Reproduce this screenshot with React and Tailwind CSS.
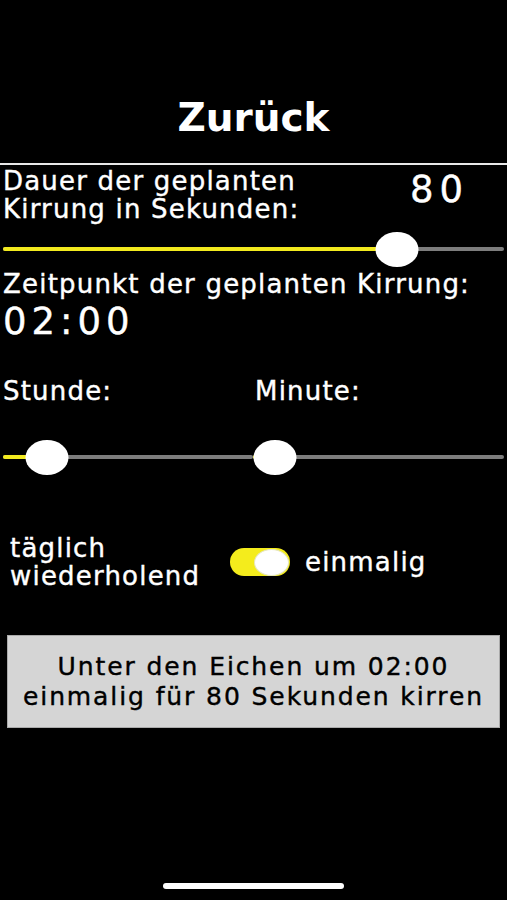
import React from "react";

function Slider({ value }) {
  return (
    <div className="relative h-[36px] flex items-center">
      <div className="w-full h-[4px] rounded-full bg-[#7d7d7d]" />
      <div
        className="absolute left-0 h-[4px] rounded-full bg-[#f2ea1e]"
        style={{ width: `${value}%` }}
      />
      <div
        className="absolute h-[35px] w-[43px] rounded-[50%] bg-white -translate-x-1/2"
        style={{ left: `${value}%` }}
      />
    </div>
  );
}

export default function App() {
  return (
    <div
      className="min-h-[900px] w-[507px] bg-black text-white flex flex-col relative [-webkit-text-stroke:0.4px]"
      style={{ fontFamily: "'DejaVu Sans', Verdana, sans-serif" }}
    >
      <div className="pt-[95px] h-[163px] text-center text-[39px] leading-[46px] font-bold [-webkit-text-stroke:0px]">
        Zurück
      </div>
      <div className="h-[2px] bg-[#e8e8e8]" />

      <div className="flex justify-between pl-[3px] pr-[38px] pt-[2px]">
        <div className="text-[26px] leading-[28px] tracking-[1.2px]">
          Dauer der geplanten
          <br />
          Kirrung in Sekunden:
        </div>
        <div className="text-[37px] leading-[40px] tracking-[6px] pt-[3px]">80</div>
      </div>

      <div className="px-[3px] mt-[8px]">
        <Slider value={78.7} />
      </div>

      <div className="px-[3px] mt-[2px] text-[26px] leading-[30px] tracking-[1.2px]">
        Zeitpunkt der geplanten Kirrung:
      </div>
      <div className="px-[3px] mt-[1px] text-[37px] leading-[44px] tracking-[5px]">02:00</div>

      <div className="flex mt-[32px] text-[26px] leading-[30px] tracking-[1.2px]">
        <div className="w-[252px] pl-[3px]">Stunde:</div>
        <div className="pl-[3px]">Minute:</div>
      </div>

      <div className="flex mt-[33px] px-[3px]">
        <div className="w-[250px]">
          <Slider value={17.5} />
        </div>
        <div className="flex-1">
          <Slider value={8.7} />
        </div>
      </div>

      <div className="flex items-center mt-[59px] pl-[10px]">
        <div className="text-[26px] leading-[28px] tracking-[1.2px] w-[220px]">
          täglich
          <br />
          wiederholend
        </div>
        <div className="w-[60px] h-[28px] rounded-full bg-[#f4ec1c] flex items-center justify-end pr-[1px]">
          <div className="w-[35px] h-[27px] rounded-[50%] bg-white border border-[#e6e6c0]" />
        </div>
        <div className="ml-[15px] text-[26px] leading-[28px] tracking-[1.2px]">einmalig</div>
      </div>

      <div className="mx-[7px] mt-[45px] w-[493px] h-[93px] bg-[#d5d5d5] border border-[#aaaaaa] text-black text-[25px] leading-[30px] tracking-[1.9px] flex flex-col items-center justify-center">
        <div>Unter den Eichen um 02:00</div>
        <div>einmalig für 80 Sekunden kirren</div>
      </div>

      <div className="absolute left-[163px] top-[883px] w-[181px] h-[6px] rounded-full bg-white" />
    </div>
  );
}
